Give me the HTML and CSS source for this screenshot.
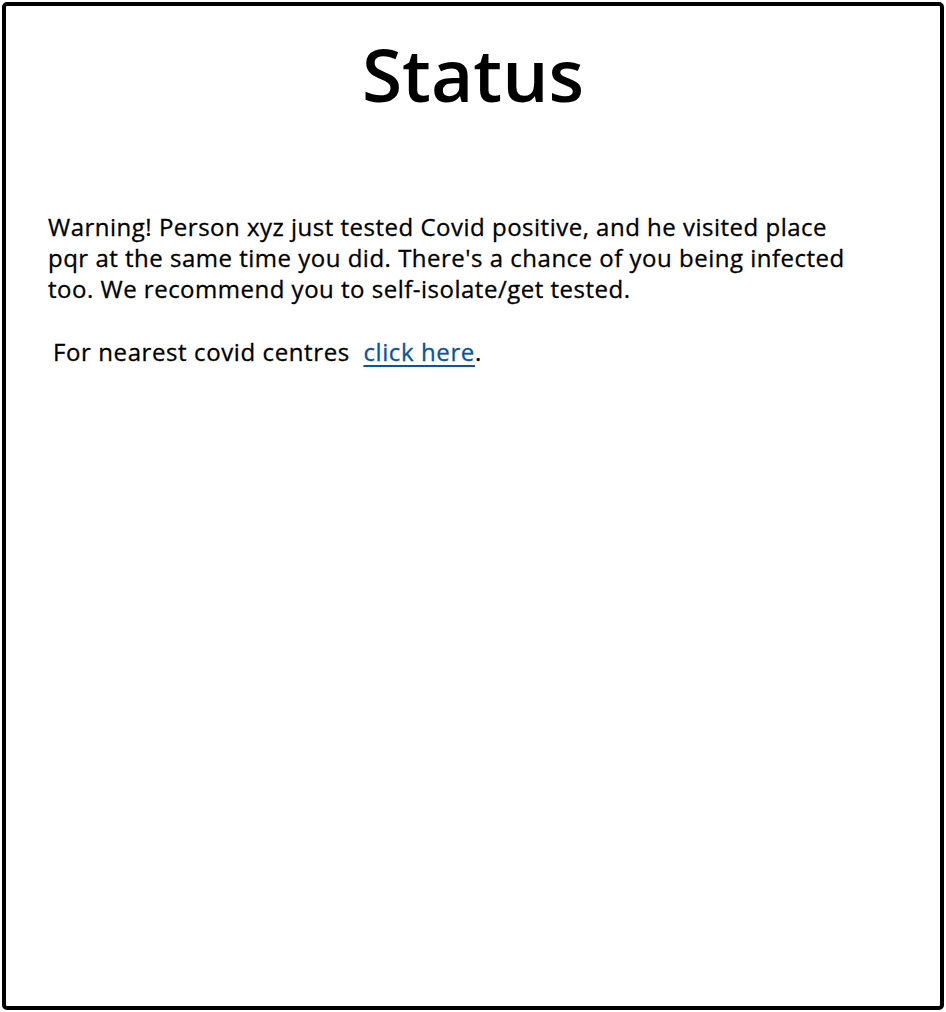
FILE: index.html
```html
<!DOCTYPE html>
<html>
<head>
<meta charset="utf-8">
<link rel="stylesheet" href="styles.css">
</head>
<body>
<div class="frame">
  <h1 class="title">Status</h1>
  <div class="content">
    <p class="warning">Warning! Person xyz just tested Covid positive, and he visited place<br>pqr at the same time you did. There's a chance of you being infected<br>too. We recommend you to self-isolate/get tested.</p>
    <p class="centres">For nearest covid centres&nbsp; <a class="link" href="#">click here</a>.</p>
  </div>
</div>
</body>
</html>
```
FILE: styles.css
```css
html, body {
  margin: 0;
  padding: 0;
  background: #fff;
}
.frame {
  box-sizing: border-box;
  width: 942px;
  height: 1008px;
  margin: 2px 0 0 2px;
  border: 4px solid #000;
  border-radius: 5px;
  font-family: "Open Sans", "DejaVu Sans", sans-serif;
  color: #000;
}
.title {
  margin: 0;
  padding-top: 20px;
  text-align: center;
  font-size: 73px;
  font-weight: 600;
  line-height: 96px;
}
.content {
  padding: 89px 0 0 42px;
}
.warning {
  margin: 0;
  font-size: 24px;
  line-height: 31px;
  letter-spacing: 0.5px;
  white-space: nowrap;
  -webkit-text-stroke: 0.3px #000;
}
.centres {
  margin: 32px 0 0 5px;
  font-size: 24px;
  line-height: 31px;
  letter-spacing: 0.6px;
  -webkit-text-stroke: 0.3px #000;
}
.link {
  color: #0b5599;
  -webkit-text-stroke: 0.3px #0b5599;
  text-decoration: underline;
  text-decoration-thickness: 2px;
  text-underline-offset: 4px;
}
```
